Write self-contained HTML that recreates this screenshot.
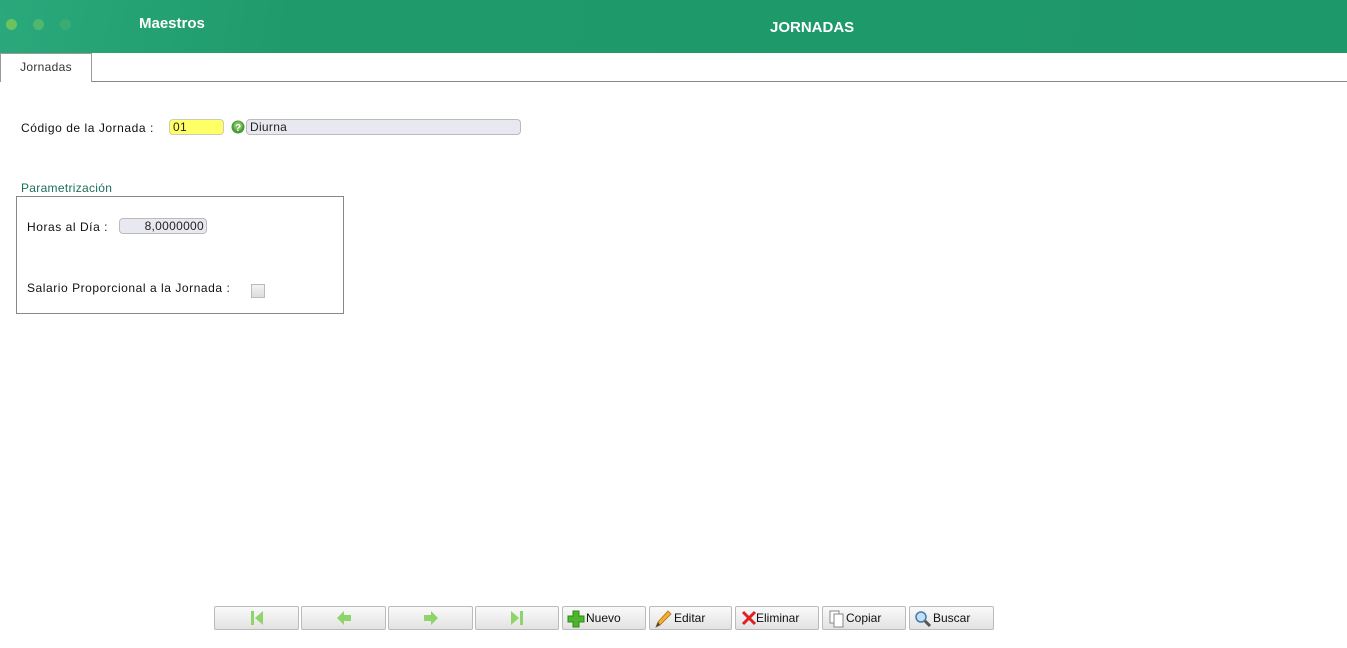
<!DOCTYPE html>
<html><head><meta charset="utf-8"><style>
*{box-sizing:border-box;margin:0;padding:0}
body{width:1347px;height:648px;background:#fff;font-family:"Liberation Sans",sans-serif;font-size:12px;color:#222;position:relative;overflow:hidden}
.hdr{position:absolute;left:0;top:0;width:1347px;height:53px;background:linear-gradient(100deg,#2aa97c 0%,#1f9a6b 22%,#1d986a 100%)}
.dot{position:absolute;top:19px;width:11px;height:11px;border-radius:50%}
.t1{position:absolute;left:139px;top:15px;color:#fff;font-weight:bold;font-size:15px}
.t2{position:absolute;left:770px;top:19px;color:#fff;font-weight:bold;font-size:15px}
.tabline{position:absolute;left:0;top:81px;width:1347px;height:1px;background:#888}
.tab{position:absolute;left:0;top:53px;width:92px;height:29px;border:1px solid #999;border-bottom:none;background:#fff;text-align:center;line-height:27px;font-size:12px;color:#333;letter-spacing:.3px}
.lbl{position:absolute;font-size:12px;color:#111;letter-spacing:.55px}
.inp{position:absolute;height:16px;border:1px solid #bbb;border-radius:4px;background:#e8e8f0;font-size:12px;line-height:14px;padding-left:3px;letter-spacing:.3px}
.box{position:absolute;left:16px;top:196px;width:328px;height:118px;border:1px solid #888}
.btn{position:absolute;top:606px;height:24px;border:1px solid #bbb;border-radius:2px;background:linear-gradient(#fafafa,#e2e2e2);font-size:12px;line-height:22px;color:#111}
.btn svg{position:absolute;top:3px}
.btn span{position:absolute;top:0}
</style></head><body>
<div class="hdr">
<div class="dot" style="left:6px;background:#7cc95a;opacity:.8"></div>
<div class="dot" style="left:33px;background:#6cc068;opacity:.6"></div>
<div class="dot" style="left:60px;background:#4bb36e;opacity:.5"></div>
<div class="t1">Maestros</div>
<div class="t2">JORNADAS</div>
</div>
<div class="tabline"></div>
<div class="tab">Jornadas</div>

<div class="lbl" style="left:21px;top:121px">Código de la Jornada :</div>
<div class="inp" style="left:169px;top:119px;width:55px;background:#ffff66;border-color:#ccb">01</div>
<svg style="position:absolute;left:231px;top:120px" width="14" height="14"><circle cx="7" cy="7" r="6.5" fill="#4a9a3a"/><circle cx="7" cy="6" r="4.5" fill="#7cc05c"/><text x="7" y="11" font-size="10" font-weight="bold" fill="#fff" text-anchor="middle" font-family="Liberation Sans">?</text></svg>
<div class="inp" style="left:246px;top:119px;width:275px">Diurna</div>

<div class="lbl" style="left:21px;top:181px;color:#1d6f5a;letter-spacing:.3px">Parametrización</div>
<div class="box"></div>
<div class="lbl" style="left:27px;top:220px">Horas al Día :</div>
<div class="inp" style="left:119px;top:218px;width:88px;text-align:right;padding-right:2px">8,0000000</div>
<div class="lbl" style="left:27px;top:281px">Salario Proporcional a la Jornada :</div>
<div style="position:absolute;left:251px;top:284px;width:14px;height:14px;border:1px solid #bbb;background:linear-gradient(#f2f2f2,#ddd)"></div>

<div class="btn" style="left:214px;width:85px"><svg style="left:34px" width="16" height="16"><rect x="2" y="1" width="3" height="14" fill="#8ed46a"/><path d="M14 1 L6 8 L14 15Z" fill="#8ed46a"/></svg></div>
<div class="btn" style="left:301px;width:85px"><svg style="left:34px" width="16" height="16"><path d="M1 8 L8 1 L8 5 L15 5 L15 11 L8 11 L8 15Z" fill="#8ed46a"/></svg></div>
<div class="btn" style="left:388px;width:85px"><svg style="left:34px" width="16" height="16"><path d="M15 8 L8 1 L8 5 L1 5 L1 11 L8 11 L8 15Z" fill="#8ed46a"/></svg></div>
<div class="btn" style="left:475px;width:84px"><svg style="left:33px" width="16" height="16"><path d="M2 1 L10 8 L2 15Z" fill="#8ed46a"/><rect x="11" y="1" width="3" height="14" fill="#8ed46a"/></svg></div>
<div class="btn" style="left:562px;width:84px"><svg style="left:4px" width="18" height="18"><path d="M6 1h6v5h5v6h-5v5H6v-5H1V6h5z" fill="#4cb52a" stroke="#2e8a1a"/></svg><span style="left:23px">Nuevo</span></div>
<div class="btn" style="left:649px;width:83px"><svg style="left:4px" width="18" height="18"><path d="M2 17 L4 12 L14 1 L17 4 L6 15Z" fill="#f0b030" stroke="#b07010" stroke-width=".8"/><path d="M2 17 L4 12 L6 15Z" fill="#444"/></svg><span style="left:24px">Editar</span></div>
<div class="btn" style="left:735px;width:84px"><svg style="left:5px" width="16" height="16"><path d="M2 2 L14 14 M14 2 L2 14" stroke="#e02020" stroke-width="3"/></svg><span style="left:20px">Eliminar</span></div>
<div class="btn" style="left:822px;width:84px"><svg style="left:6px" width="16" height="18"><rect x="1" y="1" width="9" height="12" fill="#fff" stroke="#888"/><rect x="5" y="4" width="9" height="13" fill="#fff" stroke="#888"/></svg><span style="left:23px">Copiar</span></div>
<div class="btn" style="left:909px;width:85px"><svg style="left:4px" width="18" height="18"><line x1="10" y1="10" x2="16" y2="16" stroke="#555" stroke-width="3"/><circle cx="7" cy="7" r="5" fill="#bfe0f7" stroke="#4a7aa8" stroke-width="1.5"/></svg><span style="left:23px">Buscar</span></div>
</body></html>
